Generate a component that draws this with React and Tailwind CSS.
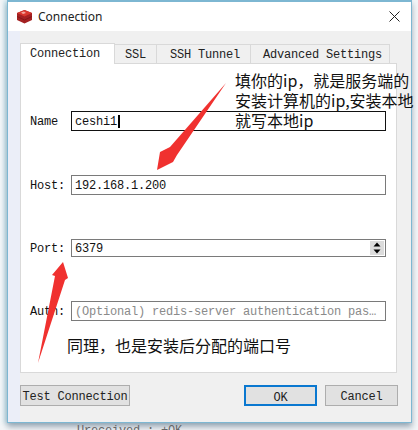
const mono = "font-['Liberation_Mono',monospace] tracking-[-0.2px]";
const fieldText = `text-[12px] leading-[16px] pt-[2px] ${mono}`;

const TABS = [
  { label: 'Connection', cls: 'w-[95px] pl-[9px]', active: true },
  { label: 'SSL', cls: 'w-[43px] pl-[10px]' },
  { label: 'SSH Tunnel', cls: 'w-[95px] pl-[13px]' },
  { label: 'Advanced Settings', cls: 'w-[140px] pl-[12px]' },
];

function RedisIcon() {
  return (
    <svg width="17" height="15" viewBox="0 0 17 15" className="shrink-0">
      <path d="M1 4 L8.500 1 L16 4 L16 11 L8.500 14.500 L1 11 Z" fill="#a42122" />
      <path d="M1 4 L8.500 1 L16 4 L8.500 7.500 Z" fill="#d9382e" />
      <path d="M5 3.500 L8 2.500 L10 4 L7 5 Z" fill="#f3a9a0" />
      <path d="M1 7.500 L8.500 11 L16 7.500" fill="none" stroke="#7c1414" strokeWidth="0.8" />
    </svg>
  );
}

function Row({ label, children, cls }) {
  return (
    <div className="flex items-center">
      <span className={`w-[50px] pl-[9px] shrink-0 text-[#111] ${fieldText}`}>{label}</span>
      <div className={`w-[315px] flex items-center pl-[3px] ${cls}`}>{children}</div>
    </div>
  );
}

function Btn({ children, cls }) {
  return (
    <button className={`h-[21px] pt-[2px] bg-[#e1e1e1] whitespace-nowrap text-[12px] text-[#222] ${mono} ${cls}`}>{children}</button>
  );
}

export default function App() {
  return (
    <div className="w-[418px] h-[430px] bg-[#f4f6f8] relative overflow-hidden pl-[7px]">
      <div className="w-[405px] h-[423px] flex flex-col border border-t-2 border-[#7db7d2] bg-white shadow-[0_4px_6px_rgba(90,110,130,0.55),-3px_0_4px_rgba(130,200,220,0.4)]">
        {/* Title bar */}
        <div className="h-[29px] flex items-center px-[8px] gap-[5px] bg-white shrink-0">
          <RedisIcon />
          <span className="text-[12px] text-[#222] font-['Noto_Sans',sans-serif]">Connection</span>
          <svg width="11" height="11" viewBox="0 0 11 11" className="ml-auto mr-[3px]">
            <path d="M0.500 0.500 L10.500 10.500 M10.500 0.500 L0.500 10.500" stroke="#222" strokeWidth="1" />
          </svg>
        </div>

        <div className="flex-1 bg-[#f0f0f0] border-l-[12px] border-[#ebeef8] pt-[12px] flex flex-col">
          {/* Tabs */}
          <div className="flex h-[20px] items-end">
            {TABS.map((t) => (
              <div
                key={t.label}
                className={`${t.cls} border border-b-0 border-[#d9d9d9] text-[12px] text-[#222] ${mono} ${
                  t.active ? 'h-[21px] -mb-px bg-white leading-[21px] relative z-10' : 'h-[19px] -ml-px bg-[#f0f0f0] leading-[20px]'
                }`}
              >
                {t.label}
              </div>
            ))}
          </div>

          {/* Pane */}
          <div className="w-[377px] h-[310px] bg-white border border-[#d9d9d9] pt-[47px] flex flex-col gap-[44px]">
            <Row label="Name" cls="h-[20px] border border-[#111]">
              <span className={`text-[#111] ${fieldText}`}>ceshi1</span>
              <span className="w-[2px] h-[13px] ml-px bg-black" />
            </Row>
            <Row label="Host:" cls="h-[20px] border border-[#7a7a7a]">
              <span className={`text-[#111] ${fieldText}`}>192.168.1.200</span>
            </Row>
            <Row label="Port:" cls="h-[18px] border border-[#7a7a7a]">
              <span className={`text-[#111] ${fieldText}`}>6379</span>
              <div className="ml-auto mr-px w-[14px] h-[14px] flex flex-col bg-[#dcdcdc]">
                <svg width="14" height="7" viewBox="0 0 14 7"><path d="M3.500 5.500 L10.500 5.500 L7 1.500 Z" fill="#000" /></svg>
                <svg width="14" height="7" viewBox="0 0 14 7"><path d="M3.500 1.500 L10.500 1.500 L7 5.500 Z" fill="#000" /></svg>
              </div>
            </Row>
            <Row label="Auth:" cls="h-[20px] border border-[#7a7a7a]">
              <span className={`text-[#8a8a8a] whitespace-nowrap ${fieldText}`}>(Optional) redis-server authentication pas…</span>
            </Row>
          </div>

          {/* Buttons */}
          <div className="flex mt-[12px] w-[378px]">
            <Btn cls="w-[110px] border border-[#adadad]">Test Connection</Btn>
            <Btn cls="w-[73px] ml-auto border-2 border-[#0a78d0]">OK</Btn>
            <Btn cls="w-[73px] ml-[8px] border border-[#adadad]">Cancel</Btn>
          </div>
        </div>
      </div>

      {/* Console text peeking out under the dialog */}
      <div className={`absolute left-[77px] top-[424px] text-[12px] leading-[14px] text-[#666] whitespace-pre ${mono}`}>Ureceived : +OK</div>

      {/* Annotations */}
      <svg width="418" height="430" viewBox="0 0 418 430" className="absolute inset-0 pointer-events-none">
        <path d="M226 83 L177 155 L173 162 L157 170 L160 152 L170 147 Z" fill="#f0312f" />
        <path d="M38 363 L65 280 L68 278 L63 262 L52 275 L55 276 Z" fill="#f0312f" />
      </svg>
      <div className="absolute left-[235px] top-[70px] text-[16px] leading-[20px] text-[#111] whitespace-nowrap font-['Noto_Sans_CJK_SC',sans-serif]">
        <div>填你的ip，就是服务端的</div>
        <div>安装计算机的ip,安装本地</div>
        <div>就写本地ip</div>
      </div>
      <div className="absolute left-[67px] top-[334px] text-[16px] leading-[22px] text-[#111] whitespace-nowrap font-['Noto_Sans_CJK_SC',sans-serif]">
        同理，也是安装后分配的端口号
      </div>
    </div>
  );
}
